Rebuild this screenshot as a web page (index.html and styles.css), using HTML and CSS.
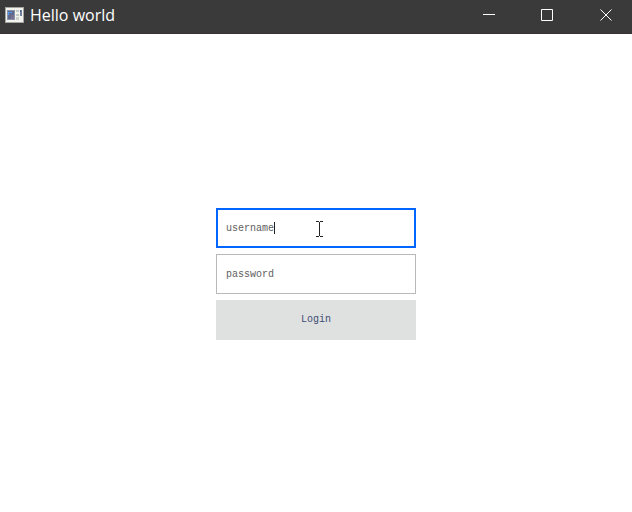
FILE: index.html
```html
<!DOCTYPE html>
<html lang="en">
<head>
<meta charset="utf-8">
<meta name="viewport" content="width=device-width, initial-scale=1">
<title>Hello world</title>
<link rel="stylesheet" href="styles.css">
</head>
<body>
<header class="titlebar">
  <svg class="app-icon" viewBox="0 0 19 16" shape-rendering="crispEdges" aria-hidden="true">
    <rect width="19" height="16" fill="#a5a5a2"/>
    <rect x="1" y="1" width="17" height="14" fill="#f3f3ee"/>
    <rect x="2" y="3" width="8" height="10" fill="#8b93a8"/>
    <rect x="3" y="4" width="6" height="8" fill="#62698f"/>
    <rect x="3" y="5" width="4" height="1" fill="#4a9bef"/>
    <rect x="3" y="6" width="1" height="2" fill="#4a9bef"/>
    <rect x="6" y="8" width="3" height="4" fill="#796f91"/>
    <rect x="11" y="3" width="3" height="2" fill="#c5cac8"/>
    <rect x="11" y="7" width="3" height="2" fill="#c5cac8"/>
    <rect x="11" y="10" width="3" height="3" fill="#cdd1ce"/>
    <rect x="15" y="3" width="2" height="6" fill="#71839a"/>
    <rect x="15" y="3" width="1" height="2" fill="#3d5f91"/>
  </svg>
  <h1 class="title">Hello world</h1>
  <div class="window-controls">
    <button class="control" type="button" aria-label="Minimize">
      <svg viewBox="0 0 12 12"><path d="M0 5.5H12"/></svg>
    </button>
    <button class="control" type="button" aria-label="Maximize">
      <svg viewBox="0 0 12 12"><path d="M.5 .5H11.5V11.5H.5Z"/></svg>
    </button>
    <button class="control control-close" type="button" aria-label="Close">
      <svg viewBox="0 0 12 12"><path d="M.5 .5L11.5 11.5M11.5 .5L.5 11.5"/></svg>
    </button>
  </div>
</header>
<main class="content">
  <form class="login">
    <div class="field">
      <input class="input input-active" type="text" aria-label="Username" value="username">
      <span class="caret"></span>
      <svg class="pointer" viewBox="0 0 7 16" shape-rendering="crispEdges" aria-hidden="true">
        <path d="M0 .5H3M4 .5H7M3.5 1V15M0 15.5H3M4 15.5H7"/>
      </svg>
    </div>
    <input class="input" type="text" aria-label="Password" value="password">
    <button class="submit" type="button">Login</button>
  </form>
</main>
</body>
</html>
```
FILE: styles.css
```css
* {
  box-sizing: border-box;
}

body {
  margin: 0;
  min-height: 100vh;
  display: flex;
  flex-direction: column;
  background: #fff;
}

.titlebar {
  display: flex;
  align-items: center;
  height: 34px;
  padding: 0 0 4px 5px;
  background: #3a3a3a;
  border-bottom: 1px solid #3b3236;
}

.app-icon {
  width: 19px;
  height: 16px;
}

.title {
  flex: 1;
  margin: 0 0 0 6px;
  color: #fff;
  font: 400 16px/24px "Open Sans", sans-serif;
}

.window-controls {
  display: flex;
  align-self: stretch;
}

.control {
  display: flex;
  align-items: center;
  justify-content: center;
  width: 58px;
  padding: 0 0 0 6px;
  border: 0;
  background: none;
}

.control-close {
  margin-left: 1px;
}

.control svg {
  width: 12px;
  height: 12px;
  fill: none;
  stroke: #fff;
}

.content {
  flex: 1;
  display: flex;
  align-items: center;
  justify-content: center;
  padding-top: 2px;
}

.login {
  display: flex;
  flex-direction: column;
  gap: 6px;
  width: 200px;
}

.field {
  position: relative;
  display: flex;
}

.input,
.submit {
  width: 100%;
  height: 40px;
  border-radius: 0;
  font: 10px/16px "Liberation Mono", monospace;
}

.input {
  padding: 0 9px;
  border: 1px solid #b9b9b9;
  background: #fff;
  color: #606060;
  outline: 0;
}

.input-active {
  padding: 0 8px;
  border: 2px solid #0066ff;
}

.submit {
  border: 0;
  background: #dfe1e0;
  color: #3e4d74;
}

.caret {
  position: absolute;
  left: 58px;
  top: 14px;
  width: 1px;
  height: 12px;
  background: #222;
}

.pointer {
  position: absolute;
  left: 100px;
  top: 13px;
  width: 7px;
  height: 16px;
  stroke: #222;
}
```
